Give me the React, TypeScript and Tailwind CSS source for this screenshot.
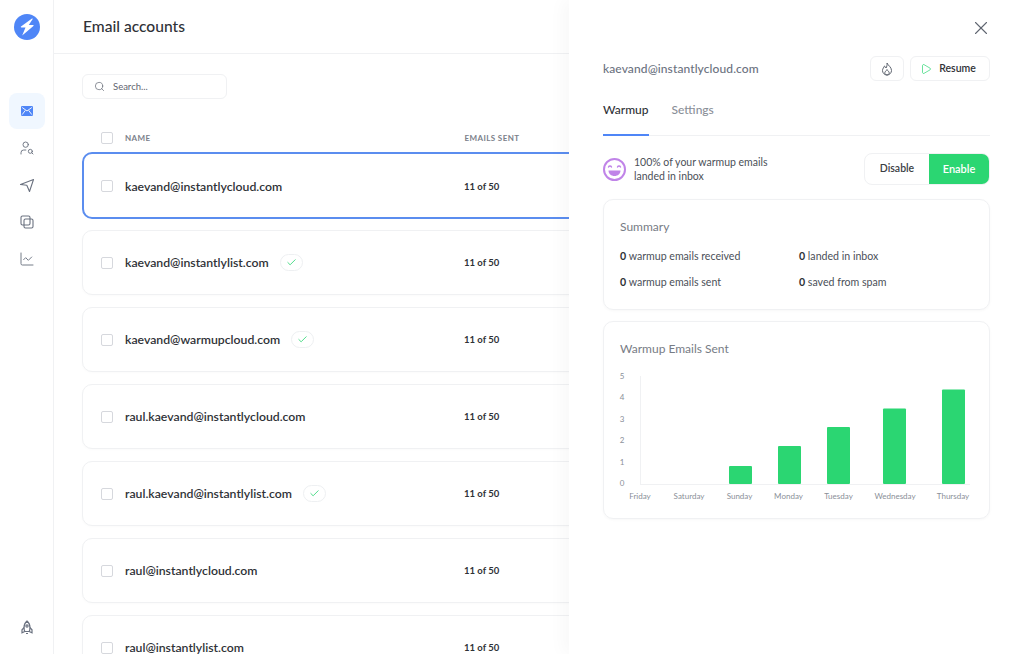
import React from 'react';
import { Check, Play, Search, ChartLine, UserSearch, X } from 'lucide-react';

const rows = [
  { email: 'kaevand@instantlycloud.com', active: true },
  { email: 'kaevand@instantlylist.com', verified: true },
  { email: 'kaevand@warmupcloud.com', verified: true },
  { email: 'raul.kaevand@instantlycloud.com' },
  { email: 'raul.kaevand@instantlylist.com', verified: true },
  { email: 'raul@instantlycloud.com' },
  { email: 'raul@instantlylist.com' },
];

const bars = [
  { label: 'Friday', cx: 640, value: 0 },
  { label: 'Saturday', cx: 689, value: 0 },
  { label: 'Sunday', cx: 739.5, x: 729, value: 18 },
  { label: 'Monday', cx: 788.5, x: 778, value: 38 },
  { label: 'Tuesday', cx: 838.5, x: 827, value: 57 },
  { label: 'Wednesday', cx: 895, x: 883, value: 75.5 },
  { label: 'Thursday', cx: 953, x: 942, value: 94.5 },
];

const Checkbox = () => (
  <span className="block h-[12px] w-[12px] shrink-0 rounded-[2px] border border-[#d6d8dd] bg-white" />
);

const Sidebar = () => (
  <div className="flex h-full w-[54px] shrink-0 flex-col items-center border-r border-[#f0f1f3] pt-[14px] pb-[19px] text-[#6b7280]">
    <svg width="26" height="26" viewBox="0 0 26 26">
      <circle cx="13" cy="13" r="13" fill="#4f86f7" />
      <path d="M18 4.500 7 12.600c-.4.3-.2.9.3.9h4.200L8.200 21.600 19.400 12c.4-.3.1-.9-.4-.9h-4.200l3.900-6c.2-.4-.3-.8-.7-.6Z" fill="#fff" />
    </svg>
    <div className="mt-[53px] flex h-[36px] w-[36px] items-center justify-center rounded-lg bg-[#f0f7ff]">
      <svg width="12" height="10" viewBox="0 0 12 10">
        <rect width="12" height="10" rx="1.2" fill="#4f86f7" />
        <path d="M1.200 1.500 6 5l4.800-3.500M1.200 8.600 4.300 4.400M10.800 8.600 7.700 4.400" stroke="#fff" strokeWidth="0.9" fill="none" />
      </svg>
    </div>
    <div className="mt-[11px] flex flex-col items-center gap-[21px]">
      <UserSearch size={16} strokeWidth={1.4} />
      <svg width="16" height="16" viewBox="0 0 16 16" fill="none" stroke="currentColor" strokeWidth="1.1" strokeLinejoin="round">
        <path d="M1.500 7.500 14.500 2.500 10.500 14.500 7.800 8.300Z" />
      </svg>
      <svg width="16" height="16" viewBox="0 0 16 16" fill="none" stroke="currentColor" strokeWidth="1.1">
        <rect x="2" y="2" width="9" height="9" rx="1.500" />
        <rect x="5" y="5" width="9" height="9" rx="1.500" />
      </svg>
      <ChartLine size={16} strokeWidth={1.4} />
    </div>
    <svg width="14" height="15" viewBox="0 0 14 15" fill="none" stroke="currentColor" strokeWidth="1.2" className="mt-auto">
      <path d="M7 1C4.900 2.800 4 5 4 7.500c0 1.500.3 2.900.8 4h4.400c.5-1.100.8-2.500.8-4C10 5 9.100 2.800 7 1Z" />
      <circle cx="7" cy="6" r="1.100" />
      <path d="M4.200 7.500 2 9.800v3l2.800-1.300M9.800 7.500 12 9.800v3l-2.800-1.300M6 13.500h2" />
    </svg>
  </div>
);

const AccountRow = ({ email, active, verified }: { email: string; active?: boolean; verified?: boolean }) => (
  <div
    className={
      active
        ? '-my-px flex h-[67px] w-[700px] shrink-0 items-center rounded-[10px] border-2 border-[#5b8def] bg-white pl-[17px]'
        : 'flex h-[65px] w-[700px] shrink-0 items-center rounded-[10px] border border-[#f0f1f3] bg-white pl-[18px] shadow-[0_1px_3px_rgba(0,0,0,0.02)]'
    }
  >
    <Checkbox />
    <span className={active ? 'ml-[12px] pt-[3px] text-[12.25px] font-semibold text-[#2f3237]' : 'ml-[12px] pt-[2px] text-[12.25px] font-semibold text-[#2f3237]'}>{email}</span>
    {verified && (
      <span className="ml-[11px] flex h-[17px] w-[23px] items-center justify-center rounded-full border border-[#eef0f2]">
        <Check size={11} strokeWidth={1.8} className="text-[#2bd672]" />
      </span>
    )}
    <span className={active ? 'absolute left-[382px] pt-[3px] text-[9.5px] font-bold text-[#2f3237]' : 'absolute left-[382px] pt-[2px] text-[9.5px] font-bold text-[#2f3237]'}>11 of 50</span>
  </div>
);

const Panel = () => (
  <div className="absolute top-0 right-0 bottom-0 flex w-[455px] flex-col bg-white pr-[34px] pl-[34px] shadow-[-6px_0_16px_rgba(0,0,0,0.03)]">
    <X size={22} strokeWidth={1.2} className="mt-[17px] mr-[-2px] ml-auto text-[#5f6570]" />
    <div className="mt-[17px] flex h-[25px] items-center">
      <span className="text-[12px] font-medium tracking-[0.1px] text-[#6b7280]">kaevand@instantlycloud.com</span>
      <button className="ml-auto flex h-[25px] w-[34px] items-center justify-center rounded-md border border-[#f0f1f3]">
        <svg width="12" height="14" viewBox="0 0 12 14" fill="none" stroke="#5f6570" strokeWidth="1" strokeLinejoin="round">
          <path d="M6 1c1 2.500 4.500 4 4.500 7.500a4.500 4.500 0 0 1-9 0c0-2 1.500-3 2-4.500.8.6 1.300 1.200 1.500 2C5.800 4.800 6.300 3 6 1Z" />
          <path d="M6 13c-1.400 0-2.200-1-2.200-2.200C3.800 9.600 5.300 9 6 7.500c.7 1.500 2.200 2.100 2.200 3.300C8.200 12 7.400 13 6 13Z" />
        </svg>
      </button>
      <button className="ml-[6px] flex h-[25px] w-[80px] items-center justify-center gap-[7px] rounded-md border border-[#f0f1f3] pr-[4px] text-[10.5px] font-semibold text-[#2f3237]">
        <Play size={12} strokeWidth={1.4} className="text-[#2bd672]" />
        Resume
      </button>
    </div>
    <div className="mt-[17px] flex h-[38px] gap-[23px] border-b border-[#f0f1f3] text-[12px] font-medium">
      <span className="-mb-px h-[38px] border-b-2 border-[#4f86f7] pt-[3px] text-[#2f3237]">Warmup</span>
      <span className="pt-[3px] text-[#8a8f98]">Settings</span>
    </div>
    <div className="mt-[17px] flex h-[32px] items-center">
      <svg width="23" height="23" viewBox="0 0 23 23" fill="none" stroke="#c084e8" strokeWidth="2">
        <circle cx="11.500" cy="11.500" r="10.500" />
        <path d="M5.500 9c.6-1.300 2.400-1.300 3 0M14.500 9c.6-1.300 2.400-1.300 3 0" strokeWidth="1.400" strokeLinecap="round" />
        <path d="M5.500 12.500h12c0 3.300-2.700 5.500-6 5.500s-6-2.200-6-5.500Z" fill="#c084e8" stroke="none" />
      </svg>
      <p className="ml-[8px] text-[10.5px] leading-[14px] text-[#4b5058]">
        100% of your warmup emails
        <br />
        landed in inbox
      </p>
      <div className="ml-auto flex h-[32px] w-[126px] overflow-hidden rounded-lg border border-[#f0f1f3] text-[10.5px] font-semibold">
        <span className="flex w-[64px] items-center justify-center text-[#3a3e44]">Disable</span>
        <span className="flex flex-1 items-center justify-center bg-[#2bd672] text-[11px] text-white">Enable</span>
      </div>
    </div>
    <div className="mt-[14px] h-[111px] rounded-[10px] border border-[#f0f1f3] px-[16px] pt-[20px] shadow-[0_1px_3px_rgba(0,0,0,0.03)]">
      <h3 className="text-[12px] leading-[14px] text-[#777c85]">Summary</h3>
      <div className="mt-[16px] grid grid-cols-[179px_1fr] gap-y-[13px] text-[10.6px] leading-[13px] text-[#4b5058]">
        <span><b className="font-bold text-[#2f3237]">0</b> warmup emails received</span>
        <span><b className="font-bold text-[#2f3237]">0</b> landed in inbox</span>
        <span><b className="font-bold text-[#2f3237]">0</b> warmup emails sent</span>
        <span><b className="font-bold text-[#2f3237]">0</b> saved from spam</span>
      </div>
    </div>
    <div className="mt-[11px] h-[198px] rounded-[10px] border border-[#f0f1f3] px-[16px] pt-[20px] shadow-[0_1px_3px_rgba(0,0,0,0.03)]">
      <h3 className="text-[12px] leading-[14px] text-[#777c85]">Warmup Emails Sent</h3>
      {/* chart box starts at x=612, y=370 in the page */}
      <svg width="370" height="135" viewBox="612 370 370 135" className="-ml-[8px] mt-[14px]">
        <path d="M640.5 376V484M640 484.5H970" stroke="#f0f1f3" fill="none" />
        {[5, 4, 3, 2, 1, 0].map((n, i) => (
          <text key={n} x="622" y={379 + i * 21.4} fontSize="8" textAnchor="middle" fill="#8a8f98">{n}</text>
        ))}
        {bars.map((b) => (
          <g key={b.label}>
            {b.x !== undefined && (
              <rect x={b.x} y={484 - b.value} width="23" height={b.value} rx="1" fill="#2bd672" />
            )}
            <text x={b.cx} y="499" fontSize="8" textAnchor="middle" fill="#8a8f98">{b.label}</text>
          </g>
        ))}
      </svg>
    </div>
  </div>
);

export default function App() {
  return (
    <div className="relative flex h-[654px] w-[1024px] overflow-hidden bg-white font-['Lato',sans-serif]">
      <Sidebar />
      <div className="flex min-w-0 flex-1 flex-col">
        <div className="flex h-[54px] shrink-0 items-center border-b border-[#f0f1f3] pl-[29px]">
          <h1 className="text-[15.6px] font-medium text-[#2f3237]">Email accounts</h1>
        </div>
        <div className="pt-[20px] pl-[28px]">
          <div className="flex h-[25px] w-[145px] items-center gap-[8px] rounded-md border border-[#f0f1f3] pl-[11px] text-[9.5px] text-[#5f6570]">
            <Search size={11} strokeWidth={1.5} />
            <span className="pt-[2px]">Search...</span>
          </div>
          <div className="mt-[32px] flex h-[14px] items-center pl-[19px] text-[8px] font-bold tracking-[0.4px] text-[#7b808a]">
            <Checkbox />
            <span className="ml-[12px]">NAME</span>
            <span className="ml-[314px]">EMAILS SENT</span>
          </div>
          <div className="mt-[8px] flex flex-col gap-[12px]">
            {rows.map((r) => (
              <div key={r.email} className="relative flex items-center">
                <AccountRow {...r} />
              </div>
            ))}
          </div>
        </div>
      </div>
      <Panel />
    </div>
  );
}
